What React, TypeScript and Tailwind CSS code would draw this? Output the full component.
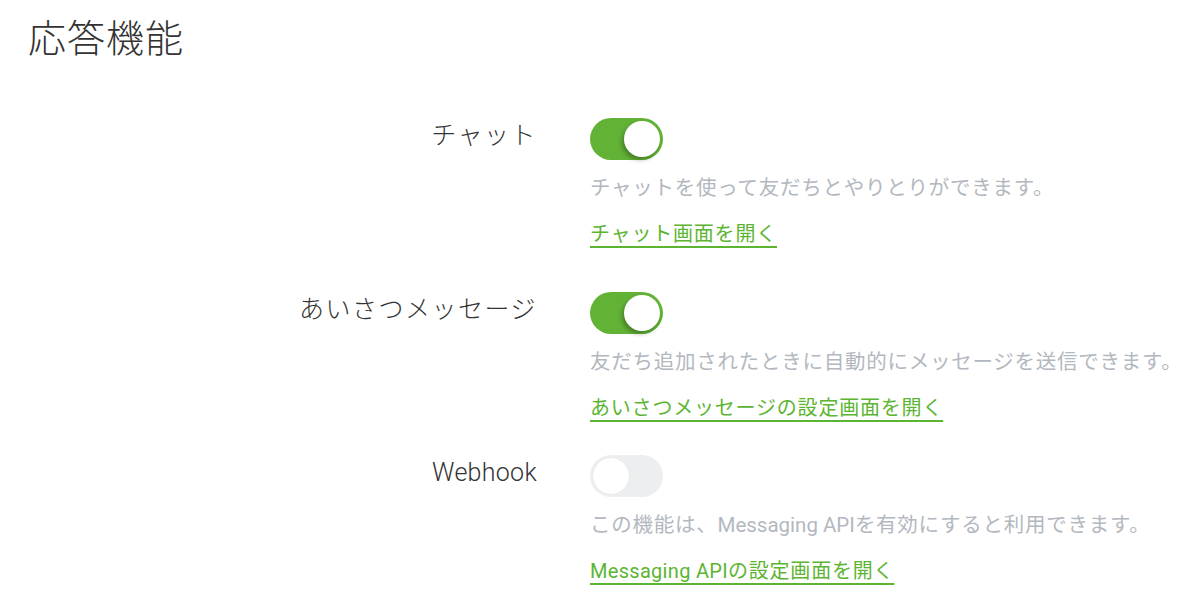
import React from "react";

const FONT = { fontFamily: 'Roboto, "Noto Sans CJK JP", sans-serif' };

function Toggle({ on }: { on: boolean }) {
  return (
    <div
      className={
        "relative h-[42px] w-[73px] rounded-full " +
        (on ? "bg-[#62b236]" : "bg-[#edeef0]")
      }
    >
      <div
        className={
          "absolute top-[3px] h-[36px] w-[36px] rounded-full bg-white " +
          (on
            ? "right-[3px] shadow-[-2px_3px_4px_rgba(0,0,0,0.28)]"
            : "left-[3px] shadow-[0_0_1px_rgba(0,0,0,0.12)]")
        }
      />
    </div>
  );
}

function Row({
  label,
  on,
  desc,
  link,
  mt,
  latinLabel,
}: {
  label: React.ReactNode;
  on: boolean;
  desc: React.ReactNode;
  link: React.ReactNode;
  mt: string;
  latinLabel?: boolean;
}) {
  return (
    <div className={"flex items-start " + mt}>
      <div
        className={
          "w-[537px] shrink-0 text-right text-[25px] font-light leading-[36px] text-[#333333] " +
          (latinLabel ? "tracking-[0.3px]" : "tracking-[1.5px]")
        }
      >
        {label}
      </div>
      <div className="ml-[53px] flex flex-col items-start">
        <Toggle on={on} />
        <div className="mt-[13px] whitespace-nowrap text-[20.5px] leading-[30px] tracking-[0.75px] text-[#b3b8c0]">
          {desc}
        </div>
        <a className="mt-[16px] whitespace-nowrap text-[20px] leading-[30px] tracking-[0.8px] text-[#5cb531] underline decoration-2 underline-offset-[5px]">
          {link}
        </a>
      </div>
    </div>
  );
}

export default function App() {
  return (
    <div className="h-[606px] w-[1202px] overflow-hidden bg-white" style={FONT}>
      <div className="pl-[28px] pt-[15px] text-[38px] font-light leading-[48px] tracking-[1px] text-[#333333]">
        応答機能
      </div>
      <Row
        mt="mt-[55px]"
        label="チャット"
        on={true}
        desc="チャットを使って友だちとやりとりができます。"
        link="チャット画面を開く"
      />
      <Row
        mt="mt-[43px]"
        label="あいさつメッセージ"
        on={true}
        desc="友だち追加されたときに自動的にメッセージを送信できます。"
        link="あいさつメッセージの設定画面を開く"
      />
      <Row
        mt="mt-[32px]"
        label="Webhook"
        latinLabel
        on={false}
        desc={
          <>
            この機能は、<span className="tracking-normal">Messaging API</span>を有効にすると利用できます。
          </>
        }
        link={
          <>
            <span className="tracking-[0.3px]">Messaging API</span>の設定画面を開く
          </>
        }
      />
    </div>
  );
}
